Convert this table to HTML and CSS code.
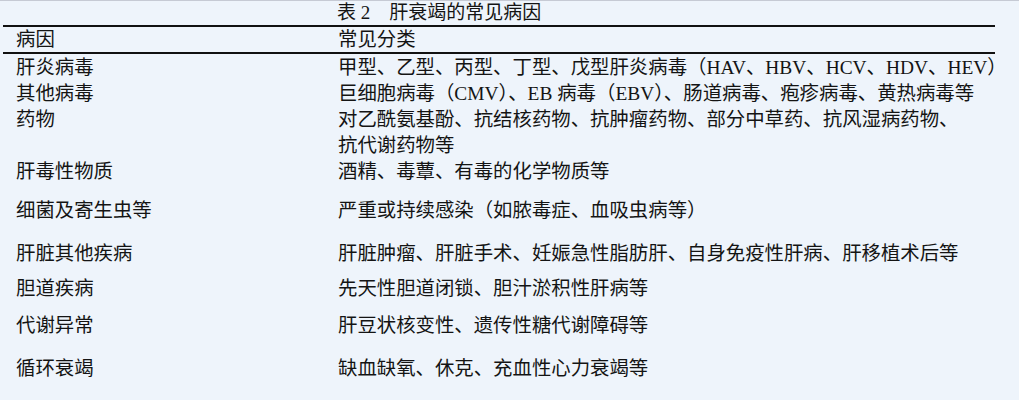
FILE: index.html
```html
<!DOCTYPE html>
<html lang="zh-CN">
<head>
<meta charset="utf-8">
<title>表 2 肝衰竭的常见病因</title>
<link rel="stylesheet" href="styles.css">
</head>
<body>
<div class="page">
  <div class="caption">表 2　肝衰竭的常见病因</div>
  <table class="causes">
    <colgroup><col class="col-cause"><col class="col-kind"></colgroup>
    <thead>
      <tr><th class="c1">病因</th><th class="c2">常见分类</th></tr>
    </thead>
    <tbody>
      <tr class="first"><td class="c1">肝炎病毒</td><td class="c2">甲型、乙型、丙型、丁型、戊型肝炎病毒（HAV、HBV、HCV、HDV、HEV）</td></tr>
      <tr><td class="c1">其他病毒</td><td class="c2">巨细胞病毒（CMV）、EB 病毒（EBV）、肠道病毒、疱疹病毒、黄热病毒等</td></tr>
      <tr><td class="c1">药物</td><td class="c2">对乙酰氨基酚、抗结核药物、抗肿瘤药物、部分中草药、抗风湿病药物、<br>抗代谢药物等</td></tr>
      <tr class="pb13"><td class="c1">肝毒性物质</td><td class="c2">酒精、毒蕈、有毒的化学物质等</td></tr>
      <tr class="pb17"><td class="c1">细菌及寄生虫等</td><td class="c2">严重或持续感染（如脓毒症、血吸虫病等）</td></tr>
      <tr class="pb9"><td class="c1">肝脏其他疾病</td><td class="c2">肝脏肿瘤、肝脏手术、妊娠急性脂肪肝、自身免疫性肝病、肝移植术后等</td></tr>
      <tr class="pb11"><td class="c1">胆道疾病</td><td class="c2">先天性胆道闭锁、胆汁淤积性肝病等</td></tr>
      <tr class="pb17"><td class="c1">代谢异常</td><td class="c2">肝豆状核变性、遗传性糖代谢障碍等</td></tr>
      <tr><td class="c1">循环衰竭</td><td class="c2">缺血缺氧、休克、充血性心力衰竭等</td></tr>
    </tbody>
  </table>
</div>
</body>
</html>
```

FILE: styles.css
```css
html, body {
  margin: 0;
  padding: 0;
  background: #eef4fb;
}
body {
  font-family: "Liberation Serif", "Noto Sans CJK SC", serif;
  font-size: 19.4px;
  color: #141414;
}
.page {
  width: 1019px;
  height: 400px;
  box-sizing: border-box;
  border-top: 1px solid #c6cad4;
  overflow: hidden;
}
.caption {
  height: 24px;
  line-height: 24px;
  padding-left: 337px;
  font-size: 19px;
  white-space: nowrap;
}
.causes {
  margin-left: 3px;
  width: 992px;
  table-layout: fixed;
  border-collapse: separate;
  border-spacing: 0;
}
.col-cause { width: 335px; }
.col-kind { width: 657px; }
.causes th {
  font-weight: normal;
  text-align: left;
  height: 25px;
  line-height: 25px;
  padding: 0;
  border-top: 2px solid #111;
  border-bottom: 2px solid #111;
  white-space: nowrap;
}
.causes td {
  padding: 0;
  line-height: 26px;
  vertical-align: top;
  white-space: nowrap;
  overflow: visible;
}
.causes .c1 { padding-left: 13px; }
.first td { padding-top: 1px; }
.pb9 td { padding-bottom: 9px; }
.pb11 td { padding-bottom: 11px; }
.pb13 td { padding-bottom: 13px; }
.pb17 td { padding-bottom: 17px; }
```
